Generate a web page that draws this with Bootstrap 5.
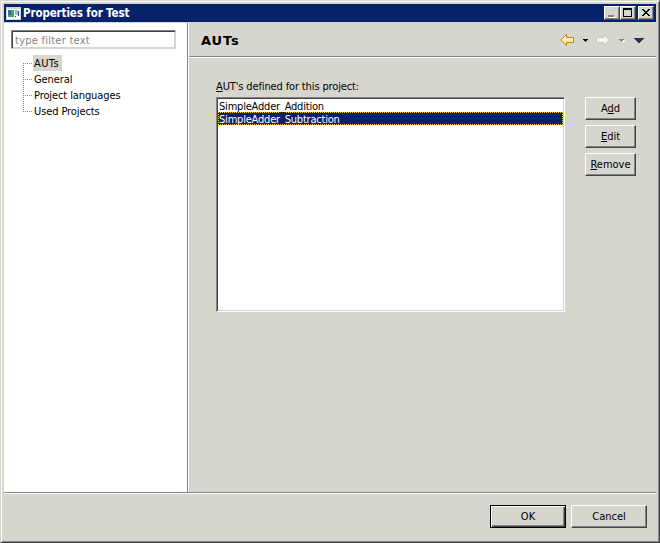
<!DOCTYPE html>
<html lang="en">
<head>
<meta charset="utf-8">
<title>Properties for Test</title>
<link href="https://cdn.jsdelivr.net/npm/bootstrap@5.3.0/dist/css/bootstrap.min.css" rel="stylesheet">
<style>
:root{--face:#d6d6ce;--navy:#08216b;--shade:#848484;--dark:#424242}
body{width:660px;height:543px;overflow:hidden;background:var(--face);color:#000;font:11px/16px "DejaVu Sans Condensed","DejaVu Sans",sans-serif;font-stretch:condensed}
.win{width:660px;height:543px;padding:2px;border:1px solid;border-color:var(--face) var(--dark) var(--dark) var(--face);box-shadow:inset 1px 1px #fff,inset -1px -1px var(--shade)}
.win-inner{width:652px;margin:1px 0 0 1px}
.titlebar{height:18px;background:var(--navy);color:#fff;padding:0 2px;margin-bottom:1px}
.title-text{font-size:11.5px;font-weight:700;letter-spacing:-.12px;margin-left:2px;line-height:18px;white-space:nowrap}
.cap-btn{width:16px;height:14px}
.cap-close{margin-left:2px}
.raised,.cap-btn{background:var(--face);border:1px solid;border-color:#fff var(--dark) var(--dark) #fff;box-shadow:inset -1px -1px var(--shade)}
.cap-btn svg,.tools svg{display:block}
.main{height:469px}
.side{width:184px;background:#fff;border-right:1px solid var(--shade);padding:7px 0 0 7px}
.sunk{background:#fff;border:1px solid;border-color:var(--shade) #fff #fff var(--shade);box-shadow:inset 1px 1px var(--dark),inset -1px -1px var(--face)}
.side .sunk{width:165px;height:19px;padding:0 3px;line-height:19px;color:#848484;border-right-color:var(--face);border-bottom-color:var(--face);letter-spacing:.25px}
.tree{margin:6px 0 0 12px}
.tree svg{display:block}
.tree-item{height:16px;line-height:18px;padding:0 2px 0 1px;width:max-content;letter-spacing:-.1px}
.tree-item.sel{background:var(--face);letter-spacing:.4px;width:29px}
.pane{border-left:1px solid #fff}
.head{height:35px;border-bottom:1px solid #fff;box-shadow:inset 0 -1px var(--shade);padding:0 11px 0 12px}
.head-title{font:700 13px/35px "DejaVu Sans",sans-serif;letter-spacing:.9px;padding-top:1px}
.body-area{padding:20px 0 0 27px}
.lbl{height:19px;line-height:18px;letter-spacing:-.13px}
.aut-list{width:349px;height:215px;padding:1px}
.opt{height:13px;line-height:15px;padding-left:1px;letter-spacing:-.2px}
.opt.sel{--dots-x:repeating-linear-gradient(90deg,#f7c64a 0 1px,var(--navy) 1px 2px);--dots-y:repeating-linear-gradient(#f7c64a 0 1px,var(--navy) 1px 2px);color:#fff;background:var(--dots-x) top/100% 1px no-repeat,var(--dots-x) bottom/100% 1px no-repeat,var(--dots-y) left/1px 100% no-repeat,var(--dots-y) right/1px 100% no-repeat,var(--navy)}
.actions{gap:5px;margin-left:20px}
.push{width:51px;height:23px;line-height:21px;text-align:center;padding:0;color:#000}
.foot{gap:5px;border-top:1px solid var(--shade);box-shadow:inset 0 1px #fff;padding:12px 9px 0 0}
.foot .push{width:76px}
.push.default{border-color:#000;box-shadow:inset 1px 1px #fff,inset -1px -1px var(--dark),inset -2px -2px var(--shade)}
</style>
</head>
<body>
<div class="win">
 <div class="win-inner">
  <div class="titlebar d-flex align-items-center">
   <svg width="15" height="13" viewBox="0 0 15 13" shape-rendering="crispEdges"><path fill="#d6d6ce" d="M0 0h15v13H0z"/><path fill="#fff" d="M1 2h13v10H1z"/><path fill="#42a573" d="M2 3h6v7H2z"/><path fill="#31738c" d="M2 3h3v5H2z"/><path fill="#9cc6bd" d="M9 3h3v5H9z"/><path fill="#214a8c" d="M12 4h1v5h-1zM9 9h1v1H9z"/></svg>
   <span class="title-text">Properties for Test</span>
   <div class="d-flex ms-auto">
    <span class="cap-btn"><svg width="14" height="12" shape-rendering="crispEdges"><path fill="#fff" d="M4 9h6v2H4z"/><path fill="#848484" d="M3 8h6v2H3z"/></svg></span>
    <span class="cap-btn"><svg width="14" height="12" shape-rendering="crispEdges"><path d="M2 1h9v9H2zM3 3v6h7V3z" fill-rule="evenodd"/></svg></span>
    <span class="cap-btn cap-close"><svg width="14" height="12" shape-rendering="crispEdges"><path d="M3 2h2v1h1v1h2V3h1V2h2v1h-1v1H9v1H8v1h1v1h1v1h1v1H9V8H8V7H6v1H5v1H3V8h1V7h1V6h1V5H5V4H4V3H3z"/></svg></span>
   </div>
  </div>
  <div class="main d-flex">
   <div class="side">
    <div class="sunk">type filter text</div>
    <div class="tree d-flex">
     <svg width="10" height="64" shape-rendering="crispEdges" stroke="#848484" stroke-dasharray="1 1"><path d="M.5 8v49M0 8.500h10M0 24.500h10M0 40.500h10M0 56.500h10"/></svg>
     <div>
      <div class="tree-item sel">AUTs</div>
      <div class="tree-item">General</div>
      <div class="tree-item">Project languages</div>
      <div class="tree-item">Used Projects</div>
     </div>
    </div>
   </div>
   <div class="pane flex-grow-1">
    <div class="head d-flex align-items-center">
     <span class="head-title">AUTs</span>
     <div class="tools ms-auto">
      <svg width="85" height="14" viewBox="0 0 85 14"><defs><linearGradient id="g" x2="0" y2="1"><stop stop-color="#fffbe0"/><stop offset="1" stop-color="#ffdf80"/></linearGradient></defs>
      <path d="M.7 7 6.500 1.500V4.500H13.500V9.500H6.500V12.500z" fill="url(#g)" stroke="#c68210"/>
      <path d="M23 6h5v1h-1v1h-1v1h-1V8h-1V7h-1z" shape-rendering="crispEdges"/>
      <path d="M49.300 7 43.500 1.500V4.500H36.500V9.500H43.500V12.500z" fill="#f5f5f2" stroke="#c6c6c1"/>
      <path d="M60 7h5v1h-1v1h-1v1h-1V9h-1V8h-1z" fill="#fff" shape-rendering="crispEdges"/><path d="M59 6h5v1h-1v1h-1v1h-1V8h-1V7h-1z" fill="#848484" shape-rendering="crispEdges"/>
      <path d="M74 5h10v1h-1v1h-1v1h-1v1h-1v1h-2V9h-1V8h-1V7h-1V6h-1z" fill="#313152" shape-rendering="crispEdges"/></svg>
     </div>
    </div>
    <div class="body-area">
     <div class="lbl"><u>A</u>UT's defined for this project:</div>
     <div class="d-flex">
      <div class="sunk aut-list">
       <div class="opt">SimpleAdder_Addition</div>
       <div class="opt sel">SimpleAdder_Subtraction</div>
      </div>
      <div class="actions d-flex flex-column">
       <button class="raised push">A<u>d</u>d</button>
       <button class="raised push"><u>E</u>dit</button>
       <button class="raised push"><u>R</u>emove</button>
      </div>
     </div>
    </div>
   </div>
  </div>
  <div class="foot d-flex justify-content-end">
   <button class="raised push default">OK</button>
   <button class="raised push">Cancel</button>
  </div>
 </div>
</div>
<script src="https://cdn.jsdelivr.net/npm/bootstrap@5.3.0/dist/js/bootstrap.bundle.min.js"></script>
</body>
</html>
